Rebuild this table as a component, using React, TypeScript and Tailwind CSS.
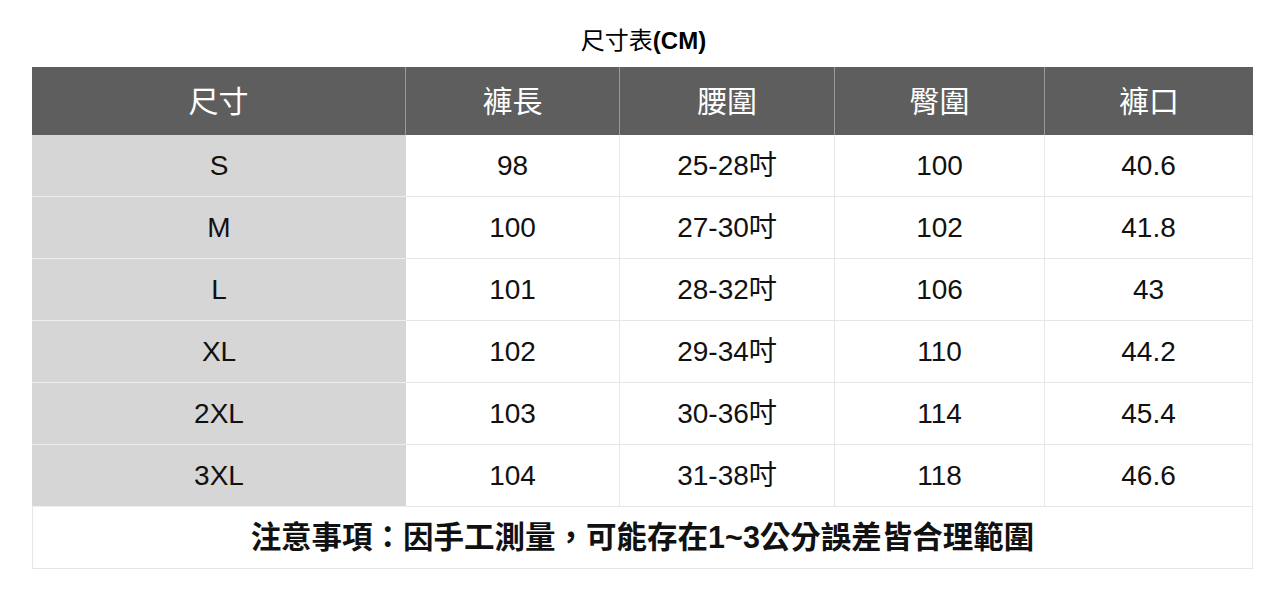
const headers = ["尺寸", "褲長", "腰圍", "臀圍", "褲口"];

const rows = [
  ["S", "98", "25-28吋", "100", "40.6"],
  ["M", "100", "27-30吋", "102", "41.8"],
  ["L", "101", "28-32吋", "106", "43"],
  ["XL", "102", "29-34吋", "110", "44.2"],
  ["2XL", "103", "30-36吋", "114", "45.4"],
  ["3XL", "104", "31-38吋", "118", "46.6"],
];

const font = { fontFamily: '"Liberation Sans", "Noto Sans CJK TC", sans-serif' };

const App = () => {
  return (
    <div lang="zh-TW" className="w-[1287px] h-[600px] bg-white pt-[26px]" style={font}>
      <div className="text-center text-[24px] text-black leading-[30px] h-[41px]">
        尺寸表<span className="font-bold">(CM)</span>
      </div>
      <div className="ml-[32px] w-[1221px] grid grid-cols-[374px_214px_215px_210px_208px]">
        {headers.map((h, i) => (
          <div
            key={h}
            className={`h-[68px] flex items-center justify-center bg-[#5e5e5e] text-white text-[30px] ${
              i < headers.length - 1 ? "border-r border-[#9a9a9a]" : ""
            }`}
          >
            {h}
          </div>
        ))}
        {rows.map((r) =>
          r.map((c, i) => (
            <div
              key={r[0] + i}
              className={`h-[62px] flex items-center justify-center text-[28px] text-[#111] border-b ${
                i === 0 ? "bg-[#d6d6d6] border-[#eeeeee]" : "bg-white border-[#e6e6e6] border-r"
              }`}
            >
              {c}
            </div>
          ))
        )}
        <div className="col-span-5 h-[62px] flex items-center justify-center text-[30.5px] font-bold text-[#111] border-l border-r border-b border-[#e6e6e6]">
          注意事項：因手工測量，可能存在1~3公分誤差皆合理範圍
        </div>
      </div>
    </div>
  );
};

export default App;
